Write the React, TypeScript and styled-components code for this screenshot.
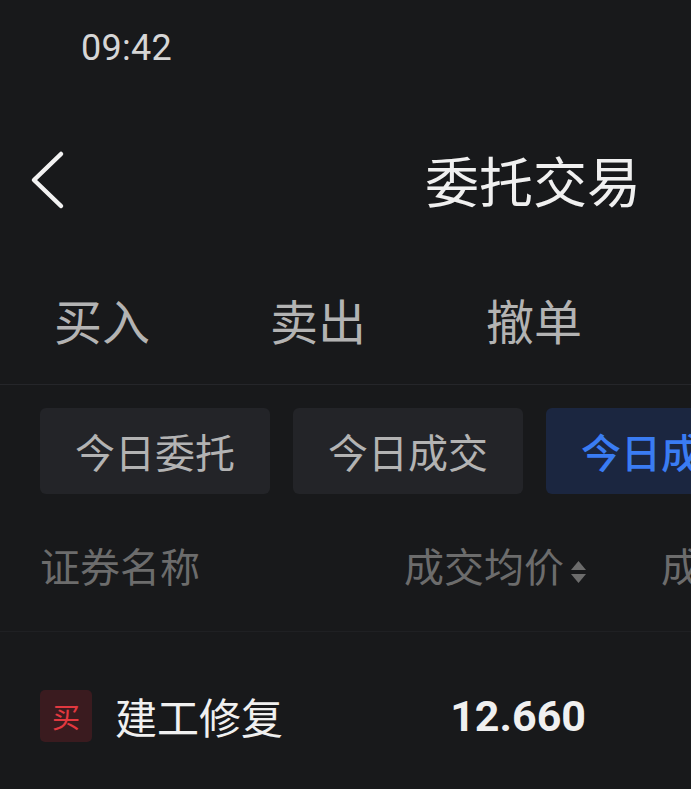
import { FC } from 'react';
import styled, { createGlobalStyle } from 'styled-components';

const palette = {
  background: '#18191b',
  chip: '#232428',
  chipActive: '#1b2640',
  blue: '#3a7cf3',
  divider: '#25262a',
  dividerSoft: '#1f2023',
  textPrimary: '#f0f0f0',
  textTab: '#b3b3b3',
  textMuted: '#6c6c6c',
  buy: '#e2383f',
  buyBg: '#3a1b1f',
};

const GlobalStyle = createGlobalStyle`
  html, body {
    margin: 0;
    padding: 0;
    background: ${palette.background};
    overflow: hidden;
  }
  body {
    font-family: 'Noto Sans CJK SC', 'Noto Sans', sans-serif;
  }
`;

const Viewport = styled.div`
  width: 691px;
  height: 789px;
  overflow: hidden;
  background: ${palette.background};
`;

const Screen = styled.div`
  width: 1066px;
  display: flex;
  flex-direction: column;
`;

const StatusBar = styled.div`
  height: 97px;
  display: flex;
  align-items: center;
  padding-left: 81px;
  box-sizing: border-box;
`;

const Clock = styled.span`
  font-family: 'Roboto', sans-serif;
  font-size: 36px;
  line-height: 1;
  color: #d6d6d6;
  letter-spacing: 0.3px;
  margin-top: -2px;
`;

const NavBar = styled.div`
  position: relative;
  height: 166px;
  display: flex;
  align-items: center;
  justify-content: center;
`;

const BackButton = styled.button`
  position: absolute;
  left: 28px;
  top: 50%;
  transform: translateY(-50%);
  background: none;
  border: 0;
  padding: 0;
  display: flex;
`;

const Title = styled.h1`
  margin: 0;
  font-size: 54px;
  font-weight: 400;
  line-height: 1;
  color: ${palette.textPrimary};
`;

const TabBar = styled.div`
  height: 122px;
  display: flex;
  align-items: center;
  gap: 120px;
  padding-left: 54px;
  border-bottom: 1px solid ${palette.divider};
  box-sizing: border-box;
`;

const Tab = styled.span`
  font-size: 48px;
  line-height: 1;
  color: ${palette.textTab};
  margin-top: -10px;
`;

const ChipRow = styled.div`
  display: flex;
  gap: 23px;
  padding: 23px 0 0 40px;
`;

const Chip = styled.div<{ $active?: boolean }>`
  width: 230px;
  height: 86px;
  flex-shrink: 0;
  border-radius: 6px;
  display: flex;
  align-items: center;
  padding-left: 35px;
  box-sizing: border-box;
  white-space: nowrap;
  overflow: hidden;
  font-size: 40px;
  line-height: 1;
  font-weight: ${({ $active }) => ($active ? 500 : 400)};
  background: ${({ $active }) => ($active ? palette.chipActive : palette.chip)};
  color: ${({ $active }) => ($active ? palette.blue : palette.textTab)};
`;

const TableRow = styled.div<{ $height: number; $divider?: boolean }>`
  display: grid;
  grid-template-columns: 246px 227px 300px;
  column-gap: 74px;
  align-items: center;
  padding-left: 40px;
  height: ${({ $height }) => $height}px;
  border-bottom: ${({ $divider }) => ($divider ? `1px solid ${palette.dividerSoft}` : 'none')};
  box-sizing: border-box;
`;

const HeaderCell = styled.div<{ $align?: 'left' | 'right' }>`
  display: flex;
  align-items: center;
  justify-content: ${({ $align }) => ($align === 'right' ? 'flex-end' : 'flex-start')};
  gap: 6px;
  font-size: 40px;
  line-height: 1;
  color: ${palette.textMuted};
  white-space: nowrap;
  margin-top: 4px;
`;

const NameCell = styled.div`
  display: flex;
  align-items: center;
  gap: 23px;
  white-space: nowrap;
`;

const SideBadge = styled.span`
  width: 52px;
  height: 52px;
  flex-shrink: 0;
  border-radius: 5px;
  background: ${palette.buyBg};
  color: ${palette.buy};
  font-size: 28px;
  line-height: 1;
  display: flex;
  align-items: center;
  justify-content: center;
`;

const StockName = styled.span`
  font-size: 42px;
  line-height: 1;
  color: ${palette.textPrimary};
`;

const Price = styled.span`
  justify-self: end;
  font-family: 'Roboto', sans-serif;
  font-size: 43px;
  font-weight: 700;
  line-height: 1;
  color: ${palette.textPrimary};
  margin-right: 1px;
`;

const ChevronLeft: FC = () => (
  <svg width="38" height="60" viewBox="0 0 38 60" fill="none">
    <path d="M33 4 L6 30 L33 56" stroke="#f2f2f2" strokeWidth="4.5" strokeLinecap="round" strokeLinejoin="round" />
  </svg>
);

const SortIcon: FC = () => (
  <svg width="17" height="24" viewBox="0 0 17 24" style={{ marginTop: 14 }}>
    <path d="M8.5 1 L16 10 H1 Z" fill={palette.textMuted} />
    <path d="M8.5 23 L16 14 H1 Z" fill={palette.textMuted} />
  </svg>
);

const tabs = ['买入', '卖出', '撤单'];
const chips = [
  { label: '今日委托' },
  { label: '今日成交' },
  { label: '今日成交汇总', active: true },
];

const App: FC = () => (
  <Viewport>
    <GlobalStyle />
    <Screen>
      <StatusBar>
        <Clock>09:42</Clock>
      </StatusBar>
      <NavBar>
        <BackButton aria-label="返回">
          <ChevronLeft />
        </BackButton>
        <Title>委托交易</Title>
      </NavBar>
      <TabBar>
        {tabs.map((t) => (
          <Tab key={t}>{t}</Tab>
        ))}
      </TabBar>
      <ChipRow>
        {chips.map((c) => (
          <Chip key={c.label} $active={c.active}>
            {c.label}
          </Chip>
        ))}
      </ChipRow>
      <TableRow $height={138} $divider>
        <HeaderCell>证券名称</HeaderCell>
        <HeaderCell $align="right">
          成交均价
          <SortIcon />
        </HeaderCell>
        <HeaderCell>成交数量</HeaderCell>
      </TableRow>
      <TableRow $height={168}>
        <NameCell>
          <SideBadge>买</SideBadge>
          <StockName>建工修复</StockName>
        </NameCell>
        <Price>12.660</Price>
        <span />
      </TableRow>
    </Screen>
  </Viewport>
);

export default App;
